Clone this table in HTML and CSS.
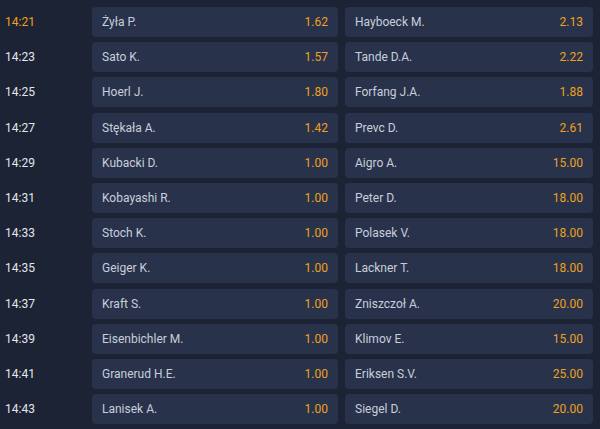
FILE: index.html
```html
<!DOCTYPE html>
<html>
<head>
<meta charset="utf-8">
<link rel="stylesheet" href="styles.css">
</head>
<body>
<div class="list">
  <div class="row"><div class="time active">14:21</div><div class="cell"><span class="name">Żyła P.</span><span class="odd">1.62</span></div><div class="cell"><span class="name">Hayboeck M.</span><span class="odd">2.13</span></div></div>
  <div class="row"><div class="time">14:23</div><div class="cell"><span class="name">Sato K.</span><span class="odd">1.57</span></div><div class="cell"><span class="name">Tande D.A.</span><span class="odd">2.22</span></div></div>
  <div class="row"><div class="time">14:25</div><div class="cell"><span class="name">Hoerl J.</span><span class="odd">1.80</span></div><div class="cell"><span class="name">Forfang J.A.</span><span class="odd">1.88</span></div></div>
  <div class="row"><div class="time">14:27</div><div class="cell"><span class="name">Stękała A.</span><span class="odd">1.42</span></div><div class="cell"><span class="name">Prevc D.</span><span class="odd">2.61</span></div></div>
  <div class="row"><div class="time">14:29</div><div class="cell"><span class="name">Kubacki D.</span><span class="odd">1.00</span></div><div class="cell"><span class="name">Aigro A.</span><span class="odd">15.00</span></div></div>
  <div class="row"><div class="time">14:31</div><div class="cell"><span class="name">Kobayashi R.</span><span class="odd">1.00</span></div><div class="cell"><span class="name">Peter D.</span><span class="odd">18.00</span></div></div>
  <div class="row"><div class="time">14:33</div><div class="cell"><span class="name">Stoch K.</span><span class="odd">1.00</span></div><div class="cell"><span class="name">Polasek V.</span><span class="odd">18.00</span></div></div>
  <div class="row"><div class="time">14:35</div><div class="cell"><span class="name">Geiger K.</span><span class="odd">1.00</span></div><div class="cell"><span class="name">Lackner T.</span><span class="odd">18.00</span></div></div>
  <div class="row"><div class="time">14:37</div><div class="cell"><span class="name">Kraft S.</span><span class="odd">1.00</span></div><div class="cell"><span class="name">Zniszczoł A.</span><span class="odd">20.00</span></div></div>
  <div class="row"><div class="time">14:39</div><div class="cell"><span class="name">Eisenbichler M.</span><span class="odd">1.00</span></div><div class="cell"><span class="name">Klimov E.</span><span class="odd">15.00</span></div></div>
  <div class="row"><div class="time">14:41</div><div class="cell"><span class="name">Granerud H.E.</span><span class="odd">1.00</span></div><div class="cell"><span class="name">Eriksen S.V.</span><span class="odd">25.00</span></div></div>
  <div class="row"><div class="time">14:43</div><div class="cell"><span class="name">Lanisek A.</span><span class="odd">1.00</span></div><div class="cell"><span class="name">Siegel D.</span><span class="odd">20.00</span></div></div>
</div>
</body>
</html>
```

FILE: styles.css
```css
html, body {
  margin: 0;
  padding: 0;
  background: #1b2334;
  width: 600px;
  height: 429px;
  overflow: hidden;
}
body {
  font-family: Roboto, "Liberation Sans", sans-serif;
  font-size: 12px;
}
.list {
  display: flex;
  flex-direction: column;
  gap: 5.2px;
  padding: 7px 7px 0 5px;
}
.row {
  display: grid;
  grid-template-columns: 80px 246px 248px;
  column-gap: 7px;
  height: 30px;
  align-items: center;
}
.time {
  color: #e3e6ec;
}
.time.active {
  color: #f0a020;
}
.cell {
  height: 30px;
  background: #28334b;
  border-radius: 4px;
  display: flex;
  align-items: center;
  justify-content: space-between;
  padding: 0 10px;
  box-sizing: border-box;
}
.name {
  color: #c8cedb;
}
.odd {
  color: #f0a020;
}
```
